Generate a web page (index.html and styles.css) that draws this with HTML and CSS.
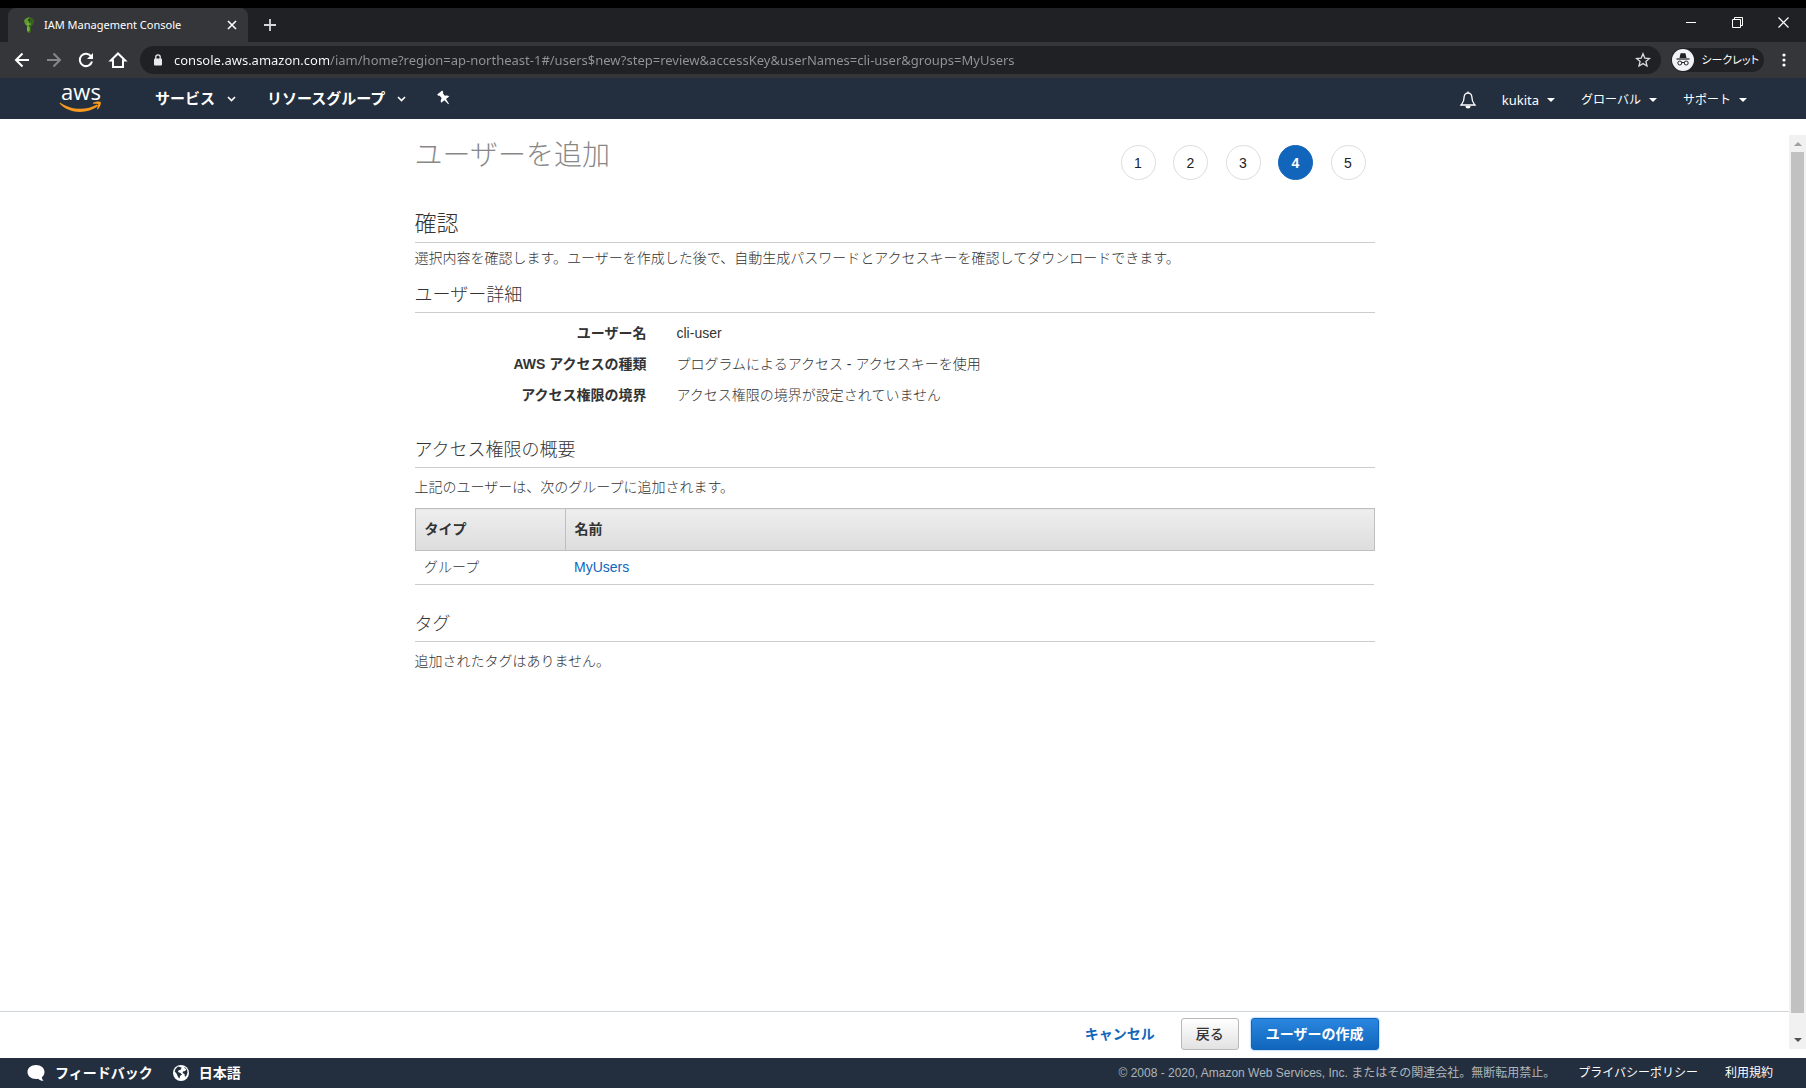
FILE: index.html
```html
<!DOCTYPE html>
<html lang="ja">
<head>
<meta charset="utf-8">
<title>IAM Management Console</title>
<link rel="stylesheet" href="styles.css">
</head>
<body>
<div class="tab-strip">
  <div class="tab">
    <svg class="tab-icon" width="12" height="16" viewBox="0 0 12 16" aria-hidden="true">
      <path d="M2 2 L6 0 L10 2 L11 5 L9 8 L8 9 L8 14 L6 16 L4 14 L4 9 L2 7 L1 4 Z" fill="#5f9a2e"/>
      <path d="M6 0 L10 2 L11 5 L9 8 L8 9 L8 14 L6 16 Z" fill="#35601c"/>
      <circle cx="6" cy="3" r="1" fill="#24331c"/>
      <path d="M4 7h4M4 11h3M4 13h3" stroke="#90c45a" stroke-width="1"/>
    </svg>
    <span class="tab-title">IAM Management Console</span>
    <button class="chrome-btn tab-close" aria-label="タブを閉じる"><svg width="10" height="10" viewBox="0 0 10 10"><path d="M1 1l8 8M9 1l-8 8" stroke="#fff" stroke-width="1.6"/></svg></button>
  </div>
  <button class="chrome-btn new-tab" aria-label="新しいタブ"><svg width="12" height="12" viewBox="0 0 12 12"><path d="M6 0v12M0 6h12" stroke="#d5d7da" stroke-width="1.8"/></svg></button>
  <div class="window-buttons">
    <button class="chrome-btn" aria-label="最小化"><svg width="11" height="11" viewBox="0 0 11 11"><path d="M0 5.500h10" stroke="#fff"/></svg></button>
    <button class="chrome-btn" aria-label="元に戻す"><svg width="11" height="11" viewBox="0 0 11 11" fill="none" stroke="#fff"><path d="M.5 2.500h8v8h-8zM2.500 2.500v-2h8v8h-2"/></svg></button>
    <button class="chrome-btn" aria-label="閉じる"><svg width="11" height="11" viewBox="0 0 11 11"><path d="M.5.5l10 10M10.500.5l-10 10" stroke="#fff" stroke-width="1.200"/></svg></button>
  </div>
</div>

<div class="toolbar">
  <div class="nav-buttons">
    <button class="chrome-btn" aria-label="戻る"><svg width="16" height="16" viewBox="0 0 16 16" fill="none" stroke="#fff" stroke-width="2"><path d="M15 8H2M8.500 1.500L2 8l6.500 6.500"/></svg></button>
    <button class="chrome-btn" aria-label="進む"><svg width="16" height="16" viewBox="0 0 16 16" fill="none" stroke="#84878b" stroke-width="2"><path d="M1 8h13M7.500 1.500L14 8l-6.500 6.500"/></svg></button>
    <button class="chrome-btn" aria-label="再読み込み"><svg width="16" height="16" viewBox="0 0 16 16" fill="none" stroke="#fff" stroke-width="2"><path d="M13.200 4.500A6.200 6.200 0 1 0 14 9.500"/><path d="M15 1v6H9z" fill="#fff" stroke="none"/></svg></button>
    <button class="chrome-btn" aria-label="ホーム"><svg width="16" height="16" viewBox="0 0 16 16" fill="none" stroke="#fff" stroke-width="2"><path d="M.8 8.500L8 1.500l7.200 7H13V15H3V8.500z"/></svg></button>
  </div>
  <div class="address-bar">
    <svg width="10" height="12" viewBox="0 0 10 12" aria-hidden="true"><rect x="1" y="4.500" width="8" height="7" rx="1" fill="#e8eaed"/><path d="M2.800 5V3a2.200 2.200 0 0 1 4.400 0v2" fill="none" stroke="#e8eaed" stroke-width="1.300"/></svg>
    <input class="url" type="text" aria-label="アドレス" value="console.aws.amazon.com/iam/home?region=ap-northeast-1#/users$new?step=review&amp;accessKey&amp;userNames=cli-user&amp;groups=MyUsers">
    <button class="chrome-btn" aria-label="ブックマーク"><svg width="16" height="16" viewBox="0 0 16 16" fill="none" stroke="#dadce0" stroke-width="1.300"><path d="M8 1.800l1.800 4.300 4.600.4-3.500 3 1.100 4.500L8 11.600 4 14l1.100-4.500-3.500-3 4.600-.4z"/></svg></button>
  </div>
  <button class="chrome-btn incognito">
    <svg width="22" height="22" viewBox="0 0 22 22" aria-hidden="true"><circle cx="11" cy="11" r="11" fill="#f1f3f4"/><path d="M7.500 9l1-4.500 1.500-.5 1 .5 1-.5 1.500.5 1 4.500z" fill="#202124"/><path d="M4.500 10h13" stroke="#202124" stroke-width="1.200"/><g fill="none" stroke="#202124"><circle cx="7.800" cy="14" r="2"/><circle cx="14.200" cy="14" r="2"/><path d="M9.800 13.500h2.400"/></g></svg>
    <span>シークレット</span>
  </button>
  <button class="chrome-btn" aria-label="メニュー"><svg width="4" height="14" viewBox="0 0 4 14" fill="#fff"><circle cx="2" cy="2" r="1.600"/><circle cx="2" cy="7" r="1.600"/><circle cx="2" cy="12" r="1.600"/></svg></button>
</div>

<header class="aws-nav">
  <a class="aws-logo" href="#" aria-label="AWS">
    <svg width="44" height="40" viewBox="0 -6 44 40"><text x="22" y="15" text-anchor="middle" class="aws-word">aws</text><path d="M1 17.500C12 25.500 28 25.500 38 19.500l1.200 1.500C28 29.500 10 29 .6 18.500z" fill="#f79a1e"/><path d="M34 17.800c3-1.600 7-1.500 7.600-.8.8 1-.4 5.200-2.900 7.500l-.8-.4c1-2.400 1.600-4.300 1.100-5-.6-.7-3.200-.4-5-.3z" fill="#f79a1e"/></svg>
  </a>
  <nav class="nav-left">
    <button class="nav-item">サービス<svg width="9" height="6" viewBox="0 0 9 6"><path d="M1 1l3.500 3.500L8 1" fill="none" stroke="#fff" stroke-width="1.600"/></svg></button>
    <button class="nav-item">リソースグループ<svg width="9" height="6" viewBox="0 0 9 6"><path d="M1 1l3.500 3.500L8 1" fill="none" stroke="#fff" stroke-width="1.600"/></svg></button>
    <button class="nav-item" aria-label="ピン留め"><svg width="14" height="15" viewBox="0 0 14 15"><path transform="rotate(-38 7 7)" d="M3.800 0h6.400v1.800l-1.200.8v3.200c1.900.7 3 1.700 3 3.200H8l-.6 5.500h-.8L6 9H2c0-1.500 1.100-2.500 3-3.200V2.600l-1.200-.8z" fill="#fff"/></svg></button>
  </nav>
  <div class="nav-right">
    <button class="nav-small" aria-label="通知"><svg width="16" height="18" viewBox="0 0 16 18"><path d="M8 2C5 2 4 4.500 4 7c0 4-1.500 5-3 7h14c-1.500-2-3-3-3-7 0-2.500-1-5-4-5zM8 2V.5" fill="none" stroke="#fff" stroke-width="1.300"/><path d="M5.500 15h5a2.500 2.500 0 0 1-5 0z" fill="#fff"/></svg></button>
    <button class="nav-small account">kukita<i class="caret"></i></button>
    <button class="nav-small">グローバル<i class="caret"></i></button>
    <button class="nav-small">サポート<i class="caret"></i></button>
  </div>
</header>

<div class="workspace">
  <div class="page">
    <main class="content">
      <div class="title-row">
        <h1>ユーザーを追加</h1>
        <ol class="steps">
          <li>1</li><li>2</li><li>3</li><li class="current" aria-current="step">4</li><li>5</li>
        </ol>
      </div>

      <h2>確認</h2>
      <p class="intro">選択内容を確認します。ユーザーを作成した後で、自動生成パスワードとアクセスキーを確認してダウンロードできます。</p>

      <h3>ユーザー詳細</h3>
      <dl class="details">
        <dt>ユーザー名</dt><dd>cli-user</dd>
        <dt>AWS アクセスの種類</dt><dd>プログラムによるアクセス - アクセスキーを使用</dd>
        <dt>アクセス権限の境界</dt><dd>アクセス権限の境界が設定されていません</dd>
      </dl>

      <h3>アクセス権限の概要</h3>
      <p>上記のユーザーは、次のグループに追加されます。</p>
      <table class="summary">
        <thead><tr><th class="col-type">タイプ</th><th>名前</th></tr></thead>
        <tbody><tr><td>グループ</td><td><a href="#">MyUsers</a></td></tr></tbody>
      </table>

      <h3>タグ</h3>
      <p>追加されたタグはありません。</p>
    </main>
    <div class="actions">
      <div class="actions-inner">
        <a class="cancel" href="#">キャンセル</a>
        <button class="btn">戻る</button>
        <button class="btn primary">ユーザーの作成</button>
      </div>
    </div>
  </div>
  <div class="scrollbar" aria-hidden="true">
    <i class="arrow up"></i>
    <div class="thumb"></div>
    <i class="arrow down"></i>
  </div>
</div>

<footer class="footer">
  <a class="foot-main" href="#"><svg width="18" height="16" viewBox="0 0 18 16"><path d="M9 0c5 0 8.500 3 8.500 7 0 2.200-1 4-2.700 5.200.2 1.600.8 2.600 1.700 3.600-2.400-.1-4.300-.9-5.500-2.100-.7.200-1.300.2-2 .2C4 13.900.5 11 .5 7S4 0 9 0z" fill="#fff"/></svg>フィードバック</a>
  <a class="foot-main" href="#"><svg width="16" height="16" viewBox="0 0 16 16"><circle cx="8" cy="8" r="8" fill="#fff"/><path d="M5 1.500L2.500 4 1.800 6.500l2 2.500 1.200 3 1.500 1.500.5-2.500L9 9.500 7.500 8 5 7l.5-1.500L8 4.500 8.500 2.500zM11 2.500l2.500 2L12 6l-2 .5L9.500 8l2 1L12 12l1.500-1.500 1-3L14 4.500 12 2.300z" fill="#232f3e"/></svg>日本語</a>
  <span class="copyright">© 2008 - 2020, Amazon Web Services, Inc. またはその関連会社。無断転用禁止。</span>
  <a href="#">プライバシーポリシー</a>
  <a href="#">利用規約</a>
</footer>
</body>
</html>
```
FILE: styles.css
```css
* { box-sizing: border-box; }

body {
  margin: 0;
  min-height: 100vh;
  display: flex;
  flex-direction: column;
  border-top: 8px solid #000;
  background: #fff;
  color: #333;
  font: 300 14px/20px "Liberation Sans", "Noto Sans CJK JP", sans-serif;
}

button { font: inherit; cursor: pointer; }
a { color: #1166bb; text-decoration: none; }
svg { display: block; flex: none; overflow: visible; }

/* Browser window */
.chrome-btn {
  display: flex;
  align-items: center;
  justify-content: center;
  flex: none;
  padding: 0;
  border: 0;
  background: none;
  color: #fff;
}

.tab-strip {
  display: flex;
  height: 34px;
  padding-left: 8px;
  background: #202124;
  font-family: "Noto Sans", sans-serif;
}

.tab {
  display: flex;
  align-items: center;
  width: 240px;
  padding: 0 11px 0 15px;
  border-radius: 8px 8px 0 0;
  background: #35363a;
}
.tab-icon { margin-right: 9px; }
.tab-title { flex: 1; color: #fff; font-size: 11px; font-weight: 400; white-space: nowrap; }
.new-tab { width: 44px; }

.window-buttons { display: flex; margin-left: auto; padding-bottom: 6px; }
.window-buttons .chrome-btn { width: 46px; }

.toolbar {
  display: flex;
  align-items: center;
  gap: 10px;
  height: 36px;
  padding: 0 20px 0 14px;
  background: #35363a;
}
.nav-buttons { display: flex; gap: 16px; margin-right: 4px; }

.address-bar {
  display: flex;
  align-items: center;
  flex: 1;
  gap: 11px;
  height: 28px;
  padding: 0 10px 0 13px;
  border-radius: 14px;
  background: #202124;
}
.url {
  flex: 1;
  min-width: 0;
  height: 24px;
  padding: 0;
  border: 0;
  outline: 0;
  background: linear-gradient(90deg, #fff 155px, #92959a 155px);
  -webkit-background-clip: text;
  background-clip: text;
  color: transparent;
  font: 400 13px/24px "Noto Sans", sans-serif;
}

.incognito {
  gap: 7px;
  height: 24px;
  margin-right: 8px;
  padding: 0 5px 0 1px;
  border-radius: 12px;
  background: #202124;
  font-size: 11px;
  font-weight: 400;
  font-feature-settings: "palt";
}

/* Console navigation */
.aws-nav {
  display: flex;
  align-items: center;
  height: 41px;
  padding: 0 59px 0 59px;
  background: #232f3e;
}
.aws-word { fill: #fff; font: 500 22px "Open Sans", sans-serif; }

.nav-left { display: flex; gap: 31px; margin-left: 52px; }
.nav-right { display: flex; gap: 26px; margin-left: auto; }
.nav-item, .nav-small {
  display: flex;
  align-items: center;
  padding: 0;
  border: 0;
  background: none;
  color: #fff;
}
.nav-item { gap: 12px; font-size: 15px; font-weight: 700; }
.nav-small { gap: 8px; padding-top: 2px; font: 400 12px/20px "Noto Sans", "Noto Sans CJK JP", sans-serif; }
.account { font-size: 13px; }
.caret {
  border: 4px solid transparent;
  border-top-color: #fff;
  border-bottom: 0;
}

/* Page body */
.workspace { display: flex; flex: 1; }
.page { display: flex; flex: 1; flex-direction: column; min-width: 0; }
.content {
  flex: 1;
  width: 100%;
  max-width: 960px;
  margin: 0 auto;
  padding-top: 17px;
}

.title-row { display: flex; justify-content: space-between; height: 72px; }
h1 { margin: 0; color: #888; font-size: 28px; font-weight: 300; line-height: 40px; }

.steps {
  display: flex;
  justify-content: space-between;
  width: 245px;
  margin: 9px 9px 0 0;
  padding: 0;
  list-style: none;
}
.steps li {
  width: 35px;
  height: 35px;
  border: 1px solid #ddd;
  border-radius: 50%;
  color: #222;
  line-height: 34px;
  text-align: center;
}
.steps .current { border-color: #1166bb; background: #1166bb; color: #fff; font-weight: 700; }

h2, h3 { margin: 0; border-bottom: 1px solid #ccc; font-weight: 300; }
h2 { padding-bottom: 3px; font-size: 22px; line-height: 31px; }
h3 { padding-bottom: 2px; font-size: 18px; line-height: 29px; }
p { margin: 9px 0 11px; }
.intro { margin: 5px 0 13px; }

.details {
  display: grid;
  grid-template-columns: 232px 1fr;
  gap: 11px 30px;
  margin: 10px 0 31px;
}
.details dt { font-weight: 700; text-align: right; }
.details dd { margin: 0; }

.summary { width: 100%; margin-bottom: 25px; border-collapse: collapse; }
.summary th {
  height: 42px;
  padding: 0 9px 2px;
  border: 1px solid #bfbfbf;
  background: linear-gradient(#eee, #ddd);
  font-weight: 700;
  text-align: left;
}
.summary .col-type { width: 150px; }
.summary td { height: 34px; padding: 0 9px 2px; border-bottom: 1px solid #ccc; }

.actions { border-top: 1px solid #d0d5d9; }
.actions-inner {
  display: flex;
  align-items: center;
  justify-content: flex-end;
  gap: 12px;
  max-width: 968px;
  height: 46px;
  margin: 0 auto;
  padding-bottom: 2px;
}
.cancel { margin-right: 14px; font-weight: 700; }
.btn {
  height: 32px;
  padding: 0 14px;
  border: 1px solid #b8b8b8;
  border-radius: 3px;
  background: linear-gradient(#fff, #e2e2e2);
  color: #333;
  font-weight: 500;
}
.primary {
  border-color: #1166bb;
  background: linear-gradient(#2a86e0, #1166bb);
  box-shadow: 0 0 2px #4a9bf0;
  color: #fff;
  font-weight: 700;
}

.scrollbar {
  display: flex;
  flex-direction: column;
  align-items: center;
  width: 17px;
  margin: 16px 0 9px;
  padding: 7px 0;
  background: #f1f1f1;
}
.arrow { border: 4px solid transparent; }
.up { border-top: 0; border-bottom-color: #a0a0a0; }
.down { border-bottom: 0; border-top-color: #505050; }
.thumb { flex: 1; width: 13px; margin: 6px 0 25px; background: #c1c1c1; }

.footer {
  display: flex;
  align-items: center;
  gap: 27px;
  height: 30px;
  padding: 0 33px 0 27px;
  background: #232f3e;
  color: #aeb5bc;
  font-size: 12px;
  font-weight: 400;
}
.footer a { color: #fff; }
.footer .foot-main { display: flex; align-items: center; gap: 10px; font-size: 14px; font-weight: 700; margin-right: -7px; }
.copyright { margin: 0 -4px 0 auto; }
```
